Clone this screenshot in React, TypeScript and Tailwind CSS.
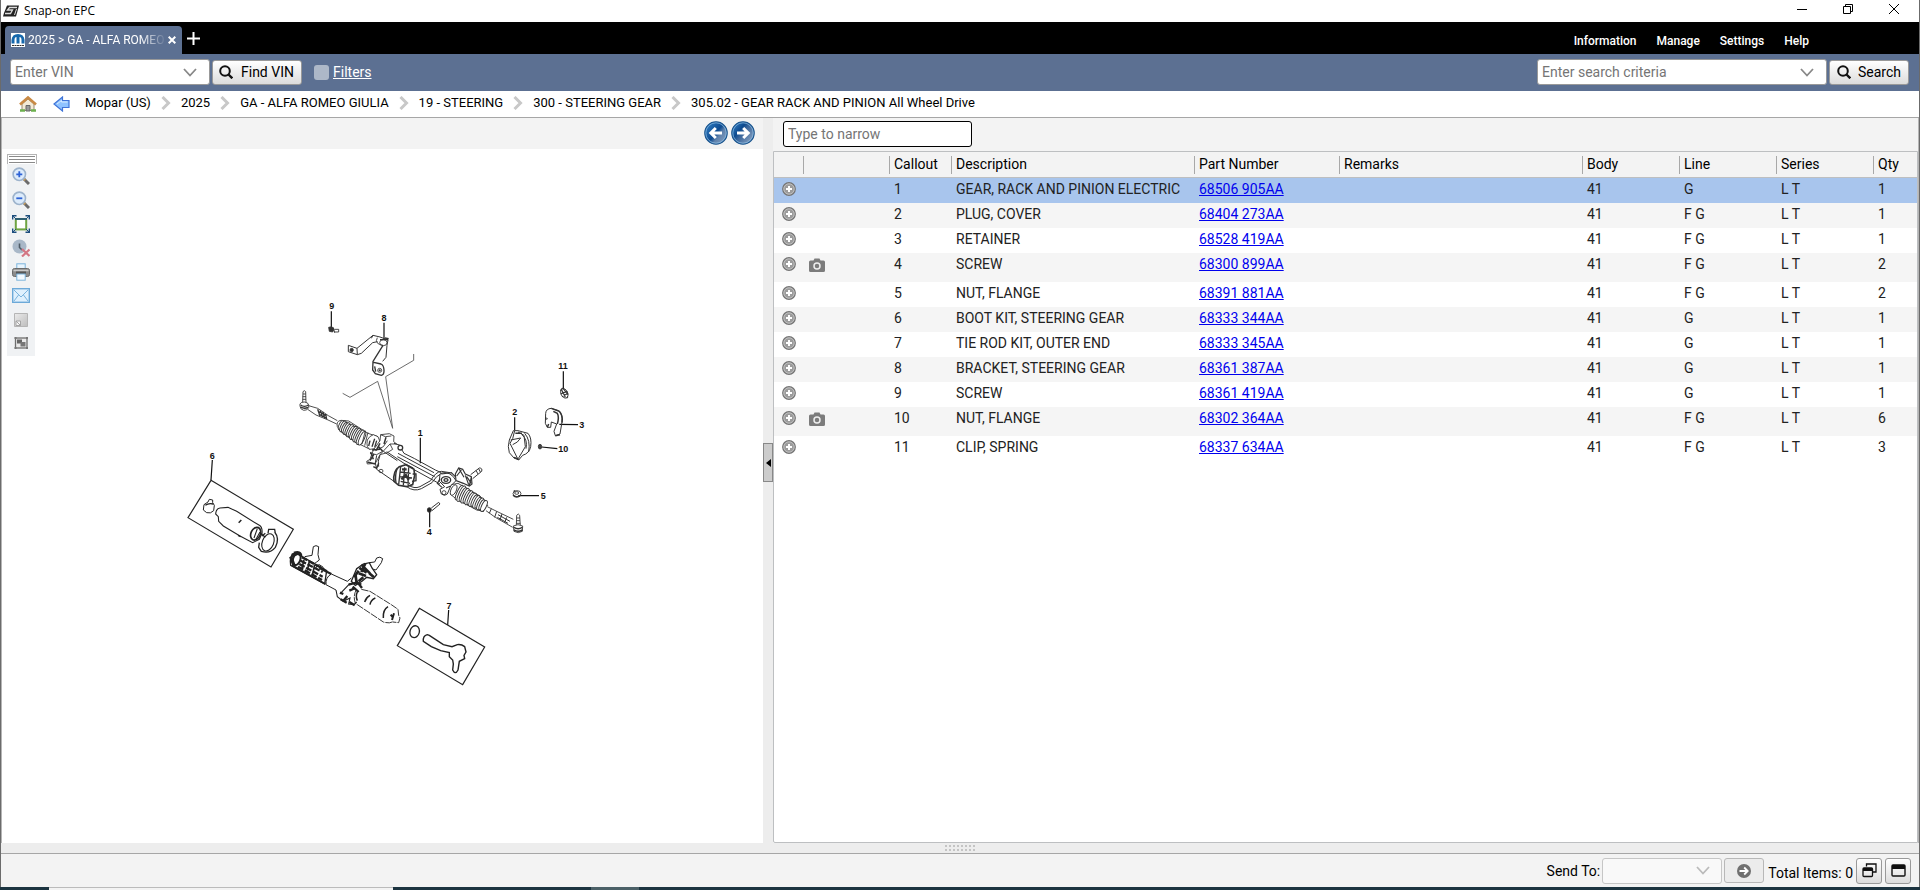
import { useState } from 'react';
import type { ReactNode } from 'react';

interface Part {
  callout: number;
  description: string;
  partNumber: string;
  line: string;
  qty: number;
  photo?: boolean;
}

const parts: Part[] = [
  { callout: 1, description: 'GEAR, RACK AND PINION ELECTRIC', partNumber: '68506 905AA', line: 'G', qty: 1 },
  { callout: 2, description: 'PLUG, COVER', partNumber: '68404 273AA', line: 'F G', qty: 1 },
  { callout: 3, description: 'RETAINER', partNumber: '68528 419AA', line: 'F G', qty: 1 },
  { callout: 4, description: 'SCREW', partNumber: '68300 899AA', line: 'F G', qty: 2, photo: true },
  { callout: 5, description: 'NUT, FLANGE', partNumber: '68391 881AA', line: 'F G', qty: 2 },
  { callout: 6, description: 'BOOT KIT, STEERING GEAR', partNumber: '68333 344AA', line: 'G', qty: 1 },
  { callout: 7, description: 'TIE ROD KIT, OUTER END', partNumber: '68333 345AA', line: 'G', qty: 1 },
  { callout: 8, description: 'BRACKET, STEERING GEAR', partNumber: '68361 387AA', line: 'G', qty: 1 },
  { callout: 9, description: 'SCREW', partNumber: '68361 419AA', line: 'G', qty: 1 },
  { callout: 10, description: 'NUT, FLANGE', partNumber: '68302 364AA', line: 'F G', qty: 6, photo: true },
  { callout: 11, description: 'CLIP, SPRING', partNumber: '68337 634AA', line: 'F G', qty: 3 },
];

const crumbs = [
  'Mopar (US)',
  '2025',
  'GA - ALFA ROMEO GIULIA',
  '19 - STEERING',
  '300 - STEERING GEAR',
  '305.02 - GEAR RACK AND PINION All Wheel Drive',
];

const columns = ['', '', 'Callout', 'Description', 'Part Number', 'Remarks', 'Body', 'Line', 'Series', 'Qty'];

function SearchIcon() {
  return (
    <svg width="14" height="14" viewBox="0 0 14 14" fill="none" stroke="#111" strokeWidth="2">
      <circle cx="6" cy="6" r="4.8" />
      <path d="M9.5 9.5L13.3 13.3" strokeWidth="2.4" />
    </svg>
  );
}

function ChevronDown({ color }: { color: string }) {
  return (
    <svg width="14" height="9" viewBox="0 0 14 9" fill="none" stroke={color} strokeWidth="1.8">
      <path d="M1 1L7 7.5L13 1" />
    </svg>
  );
}

function CrumbArrow() {
  return (
    <svg width="10" height="14" viewBox="0 0 10 14" fill="none" stroke="#c8c8c8" strokeWidth="3">
      <path d="M1.5 1L7.5 7L1.5 13" />
    </svg>
  );
}

function NavArrow({ back }: { back?: boolean }) {
  return (
    <svg width="24" height="24" viewBox="0 0 24 24">
      <defs>
        <linearGradient id={back ? 'navBack' : 'navNext'} x1={back ? '1' : '0'} y1={back ? '1' : '0'} x2={back ? '0' : '1'} y2={back ? '0.2' : '0.8'}>
          <stop offset="0" stopColor={back ? '#8aa3c2' : '#3b8bd0'} />
          <stop offset="0.4" stopColor={back ? '#5f82ad' : '#0d4a8f'} />
          <stop offset="0.55" stopColor={back ? '#0d4a8f' : '#3c679c'} />
          <stop offset="1" stopColor={back ? '#2f7cc2' : '#8aa3c2'} />
        </linearGradient>
      </defs>
      <circle cx="12" cy="12" r="11.2" fill={back ? 'url(#navBack)' : 'url(#navNext)'} stroke="#1c568f" strokeWidth="1.2" />
      <circle cx="12" cy="12" r="10.2" fill="none" stroke="#8fc0e6" strokeWidth="0.7" />
      <path
        d={back ? 'M18 12H7M11.8 7L6.8 12L11.8 17' : 'M6 12H17M12.2 7L17.2 12L12.2 17'}
        fill="none"
        stroke="#fff"
        strokeWidth="3"
      />
    </svg>
  );
}

function ToolButton({ label, children }: { label: string; children: ReactNode }) {
  return (
    <button type="button" title={label} aria-label={label} className="flex h-6 w-7 items-center justify-center">
      <svg width="18" height="18" viewBox="0 0 18 18" fill="none">
        {children}
      </svg>
    </button>
  );
}

function Magnifier({ plus }: { plus?: boolean }) {
  return (
    <>
      <path d="M11.5 11.5L17 17" stroke="#6b6b6b" strokeWidth="3" />
      <path d="M11 11L13.2 13.2" stroke="#c79a55" strokeWidth="2" />
      <circle cx="7.3" cy="7.3" r="6.2" fill="#dcebfb" stroke="#9db3cc" strokeWidth="1.6" />
      <path d={plus ? 'M4.3 7.3H10.3M7.3 4.3V10.3' : 'M4.3 7.3H10.3'} stroke="#2d62d6" strokeWidth="1.8" />
    </>
  );
}

function ToolPalette() {
  return (
    <div className="mt-[5px] ml-[5px] w-[30px] shrink-0 self-start">
      <div className="flex h-[10px] flex-col justify-end gap-[2px] border border-b-0 border-[#b4b4b4] px-px pb-px">
        <div className="h-px bg-[#8a8a8a]" />
        <div className="h-px bg-[#8a8a8a]" />
        <div className="h-px bg-[#8a8a8a]" />
      </div>
      <div className="flex w-7 flex-col bg-[#f0f2f4]">
        <ToolButton label="Zoom in">
          <Magnifier plus />
        </ToolButton>
        <ToolButton label="Zoom out">
          <Magnifier />
        </ToolButton>
        <ToolButton label="Fit to window">
          <rect x="3.8" y="4" width="10.4" height="10.4" fill="#fff" stroke="#6fa443" strokeWidth="2" />
          <path d="M3 4H15" stroke="#1d4e7d" strokeWidth="1.6" />
          <path d="M0.7 4.5V0.7H4.5M13.5 0.7H17.3V4.5M17.3 13.5V17.3H13.5M4.5 17.3H0.7V13.5" stroke="#1d4e7d" strokeWidth="1.4" />
          <path d="M1 1L4 4M17 1L14 4M17 17L14 14M1 17L4 14" stroke="#1d4e7d" />
        </ToolButton>
        <ToolButton label="Clear hotspots">
          <circle cx="7.5" cy="7.5" r="7" fill="#a9b8c8" />
          <path d="M7.5 4.5V8.5L10 11" stroke="#4d5a66" strokeWidth="1.6" />
          <path d="M10 10L17.5 17M17.5 10.5L10 17.5" stroke="#d37684" strokeWidth="2.2" />
        </ToolButton>
        <ToolButton label="Print">
          <rect x="4.8" y="0.8" width="8.4" height="6" fill="#e8f4fd" stroke="#7cb4dc" />
          <rect x="0.5" y="5.5" width="17" height="8" rx="2" fill="#8b8b8b" stroke="#6a6a6a" />
          <path d="M1.5 7.5H16.5" stroke="#c9c9c9" strokeWidth="1.6" />
          <rect x="4" y="8.5" width="10" height="3" fill="#555" />
          <rect x="4.8" y="11" width="8.4" height="6.2" fill="#f2f9ff" stroke="#7cb4dc" />
        </ToolButton>
        <ToolButton label="Email">
          <rect x="0.7" y="1.7" width="16.6" height="13.6" fill="#dff0fd" stroke="#6ca9d8" strokeWidth="1.4" />
          <path d="M2 3L9 10L16 3M2 14L6.5 8M16 14L11.5 8" stroke="#79b3dd" />
        </ToolButton>
        <ToolButton label="Note">
          <defs>
            <linearGradient id="note" x1="0" y1="0" x2="1" y2="1">
              <stop offset="0" stopColor="#ebebeb" />
              <stop offset="1" stopColor="#bdbdbd" />
            </linearGradient>
          </defs>
          <path d="M3 2.5H15.5V15.5H2.5V2.5Z" fill="url(#note)" stroke="#b5b5b5" />
          <path d="M4 10H8.5V14.5H4Z" fill="#f4f4f4" stroke="#a5a5a5" />
          <path d="M4 10L8.5 14.5" stroke="#a5a5a5" />
        </ToolButton>
        <ToolButton label="Thumbnail">
          <rect x="3.5" y="3" width="11.5" height="10" fill="#e9e9e9" stroke="#6e6e6e" strokeWidth="1.3" />
          <rect x="5" y="4.5" width="5" height="4" fill="#666" />
          <rect x="8.5" y="7" width="5" height="4.500" fill="#777" />
          <path d="M2.5 2h2v2h-2zM14 2h2v2h-2zM2.5 12h2v2h-2zM14 12h2v2h-2z" fill="#777" />
        </ToolButton>
      </div>
    </div>
  );
}

const labels = [
  { n: 9, x: 155, y: 58 },
  { n: 8, x: 312, y: 93 },
  { n: 11, x: 849, y: 237 },
  { n: 2, x: 704, y: 376 },
  { n: 3, x: 905, y: 413 },
  { n: 1, x: 421, y: 438 },
  { n: 10, x: 850, y: 486 },
  { n: 5, x: 790, y: 626 },
  { n: 4, x: 448, y: 736 },
  { n: 6, x: -203, y: 506 },
  { n: 7, x: 507, y: 956 },
];

interface BootProps {
  x1: number;
  y1: number;
  x2: number;
  y2: number;
  r1: number;
  r2: number;
  count: number;
}

// ribs of a bellows boot, from (x1,y1) to (x2,y2), tapering from r1 to r2
function Boot({ x1, y1, x2, y2, r1, r2, count }: BootProps) {
  return (
    <>
      {Array.from({ length: count }, (_, i) => {
        const t = i / (count - 1);
        const cx = x1 + (x2 - x1) * t;
        const cy = y1 + (y2 - y1) * t;
        return (
          <ellipse
            key={i}
            cx={cx}
            cy={cy}
            rx={7}
            ry={r1 + (r2 - r1) * t + (i % 2) * 2}
            transform={`rotate(25 ${cx} ${cy})`}
            fill="#fff"
            strokeWidth="2.8"
          />
        );
      })}
    </>
  );
}

function PartsDiagram() {
  return (
    <svg className="min-w-0 flex-1" viewBox="37 149 726 694" role="img" aria-label="Gear rack and pinion diagram">
      <g transform="translate(280 290) scale(0.33333)" fill="none" stroke="#333" strokeWidth="2.6">
        {/* leader lines */}
        <path
          d="M154 64V112M312 98V150M850 244V298M838 403L894 404M704 382V420M785 471L832 476M421 443V520M715 617H777M449 665V712M-203 510L-207 570M506 960L503 1005"
          stroke="#111"
          strokeWidth="3.6"
        />
        <path d="M188 310L210 322L293 274L338 415L317 260L401 211V192" stroke="#555" />

        {/* screw 9 */}
        <path d="M146 112L156 110L162 118L158 126L148 124Z" fill="#333" />
        <path d="M160 112L164 128M164 118H176V126H162" />

        {/* bracket 8 */}
        <path d="M205 166L231 175L232 194L205 185Z" strokeWidth="3" />
        <circle cx="215" cy="180" r="5" fill="#333" />
        <path d="M231 175L279 136L300 141L324 150L321 166L318 202L308 214M232 194L244 190L278 158L292 155M279 136L274 145" strokeWidth="3" />
        <path d="M309 166L279 214L278 240L286 251L304 256Q313 254 312 240Q311 225 303 222L281 217" strokeWidth="4" />
        <path d="M292 143Q286 152 293 160Q300 165 309 166" />
        <ellipse cx="310" cy="158" rx="11" ry="9" />
        <path d="M300 149H325M315 144L326 146M284 229L287 245" strokeWidth="4" />
        <circle cx="299" cy="241" r="6" />
        <circle cx="299" cy="241" r="2" fill="#333" />

        {/* outer tie rod, left */}
        <path d="M68 337L69 305Q73 299 77 305L78 337" />
        <path d="M69 312H77M68 320H78M68 328H78" />
        <path d="M60 342Q62 336 73 336Q85 337 86 345V353Q82 362 71 361Q60 358 60 348Z" fill="#fff" />
        <path d="M62 345Q73 353 85 345M62 351Q73 358 84 352" strokeWidth="4" />
        <path d="M86 347L113 355L145 377L172 392M83 358L108 375L140 388L170 402" />
        <path d="M113 358L120 378M121 361L127 381M129 366L134 385M137 372L140 388M118 365L140 378M116 372L138 384" strokeWidth="4" />

        {/* left bellows boot */}
        <path d="M172 410Q168 393 183 391L206 393L264 430L294 440M172 410L188 430L240 463L270 478" />
        <Boot x1={184} y1={406} x2={246} y2={445} r1={15} r2={22} count={13} />
        <path d="M256 422L246 462M264 427L254 467M294 440Q306 462 290 475L270 478Q258 474 262 450Q268 438 280 434Z" fill="#fff" />
        <path d="M284 446L276 470M290 452L284 472M270 452L266 468" strokeWidth="4" />

        {/* mounting collar and motor */}
        <path d="M300 452L302 434L328 431L342 438L341 455L350 462L330 462L300 494L286 520L262 522L260 514L270 508L280 480Z" fill="#fff" />
        <path d="M302 434L316 440L334 438M330 462L338 478L322 488L300 494M286 482L310 470L322 452M270 490L290 494L308 484" />
        <path d="M262 516L286 522M276 480L300 478M282 492L270 512M300 460L288 482M318 442L312 462M280 530L290 535L296 520M296 470L308 484M272 486L280 508" strokeWidth="4.5" />
        <path d="M290 496Q282 520 290 538L342 574M320 485L372 520L400 534M300 496Q292 514 296 530" strokeWidth="3" />
        <ellipse cx="303" cy="543" rx="6" ry="5" />
        <path d="M342 574Q338 544 358 530L378 524L402 538L404 556L398 584L380 590L356 586Z" fill="#fff" strokeWidth="5" />
        <path d="M352 534Q344 556 348 578M362 530L356 584M362 546L392 550M360 560L396 564M362 574L390 580M374 532L370 586M386 532L384 584M398 552H408V572L396 574" strokeWidth="4" />
        <path d="M366 538H380M376 552L386 570M364 568L376 556" strokeWidth="7" />
        <path d="M380 590Q402 606 424 596L456 578Q470 556 482 552L516 556M384 584Q402 598 420 590L452 572Q466 546 484 544L510 548" strokeWidth="3" />

        {/* rack tube */}
        <circle cx="361" cy="473" r="7" fill="#fff" strokeWidth="4" />
        <path d="M342 460L361 466M366 480L372 490L404 506L466 540L484 548M354 490L380 504L462 548M352 500L464 560M404 540L480 582M310 484L352 512" strokeWidth="3" />

        {/* pinion housing */}
        <path d="M480 552Q500 540 520 560L528 572L512 588L502 612Q494 620 484 612L480 598L494 590L478 574Z" fill="#fff" strokeWidth="3" />
        <path d="M484 552L514 548L526 560M480 566L472 580L486 592M512 588L498 594" strokeWidth="3.5" />
        <ellipse cx="498" cy="570" rx="14" ry="10" strokeWidth="4" />
        <ellipse cx="498" cy="570" rx="6" ry="4" strokeWidth="4" />
        <circle cx="492" cy="608" r="6" />
        <path d="M526 552L536 534L548 538L556 552L574 560L576 582L568 588L550 580L528 572Z" fill="#fff" strokeWidth="3.5" />
        <path d="M536 534L552 562M544 540L530 558M556 556L566 584M574 562L568 586M560 560L574 580" strokeWidth="3.5" />
        <path d="M572 554L598 534Q608 534 605 544L578 566M588 541L594 552M596 536L601 546" strokeWidth="3" />

        {/* right bellows boot and tie rod */}
        <path d="M514 584L534 580L600 618L624 648M510 612L528 626L590 660L612 664" />
        <ellipse cx="521" cy="600" rx="8" ry="17" transform="rotate(25 521 600)" fill="#fff" />
        <Boot x1={538} y1={608} x2={612} y2={648} r1={24} r2={16} count={14} />
        <path d="M622 650L650 664L700 688M618 662L646 682L698 712" />
        <path d="M634 656L628 670M650 664L644 682M654 674L690 694M652 682L684 700M666 672L660 690M680 682L674 698" strokeWidth="3" />
        <path d="M709 708L710 676Q715 668 719 676L721 708M710 684H720M710 692H720M709 700H721" />
        <path d="M700 708Q714 700 728 708L727 724Q715 732 702 724Z" fill="#fff" />
        <path d="M702 712Q714 720 727 712M702 720Q714 728 727 720" strokeWidth="4.5" />

        {/* clip 11 */}
        <ellipse cx="853" cy="310" rx="10" ry="15" transform="rotate(-25 853 310)" />
        <path d="M845 300L856 322M850 296L864 314M842 312L862 304M846 320L864 310M841 302L848 294M860 324L864 320" strokeWidth="3.5" />

        {/* retainer 3 */}
        <path d="M797 370Q798 356 814 355L836 362Q848 372 846 396L840 432L826 437L822 424L830 402L814 396L812 412L802 412L796 400Z" strokeWidth="3" />
        <path d="M814 355L838 364Q850 378 846 398M820 364L832 370Q838 380 832 402M826 437L840 434M802 412L806 402" strokeWidth="4.5" />
        <circle cx="800" cy="386" r="2" />

        {/* cover 2 */}
        <path d="M700 422L714 422L744 430Q756 444 752 470Q748 490 728 496L716 510L702 504L688 488Q682 470 688 450Z" strokeWidth="3" />
        <path d="M704 422L698 446L690 460L714 508M714 426L732 436L736 470L716 504M726 434Q744 450 738 476M698 464L712 456M692 450L722 444L712 456M734 430Q752 450 746 486" strokeWidth="3" />
        <path d="M706 430L726 430M702 502L718 508" strokeWidth="4.5" />

        {/* nuts 10 and 5, screw 4 */}
        <ellipse cx="780" cy="470" rx="5" ry="7" fill="#444" />
        <ellipse cx="711" cy="611" rx="12" ry="9" />
        <ellipse cx="710" cy="609" rx="6" ry="4" />
        <path d="M699 616Q710 626 722 616M701 604L706 602" strokeWidth="4" />
        <ellipse cx="448" cy="660" rx="6" ry="7" fill="#222" />
        <path d="M454 654L476 637L480 642L456 662" strokeWidth="3" />

        <g fill="#111" stroke="none" fontFamily="'Liberation Sans', Arial, sans-serif" fontWeight="700" fontSize="27" textAnchor="middle">
          {labels.map((l) => (
            <text key={l.n} x={l.x} y={l.y}>
              {l.n}
            </text>
          ))}
        </g>
      </g>

      <g transform="translate(170 440) scale(0.33333)" fill="none" stroke="#222" strokeWidth="3.3">
        {/* boot kit 6 */}
        <path d="M123 121L370 268L303 381L54 233Z" strokeWidth="3.6" />
        <path d="M102 194L114 186L118 178L128 180L128 188L133 196L131 212Q122 222 110 218L100 210Z" strokeWidth="3" />
        <path d="M106 196Q116 188 130 192" strokeWidth="4" />
        <path d="M137 222Q138 206 150 204L174 202L200 214L268 256Q278 262 276 280L268 298L248 308L210 288L160 258L146 244L145 230Z" />
        <path d="M214 240L206 248M204 286L212 290" strokeWidth="4.5" />
        <ellipse cx="257" cy="281" rx="14" ry="20" transform="rotate(25 257 281)" strokeWidth="5" />
        <path d="M262 266L252 294M270 276L258 298" />
        <ellipse cx="294" cy="307" rx="17" ry="27" transform="rotate(22 294 307)" />
        <path d="M314 276Q330 296 316 322Q300 342 274 334L266 322L268 308M294 280L296 268L314 268L316 280M276 288L286 280M270 278L286 292" strokeWidth="3.9" />

        {/* pinion gear service assembly */}
        <path d="M372 340Q358 346 362 376L464 432L470 392L386 344Z" strokeWidth="4" />
        <path d="M372 340Q392 334 392 348M362 350L372 376M366 346L382 340" strokeWidth="10" />
        <ellipse cx="380" cy="358" rx="11" ry="18" transform="rotate(20 380 358)" strokeWidth="6" />
        <path d="M396 352L462 388M392 362L458 396M388 372L458 410M384 380L456 420" strokeWidth="7" strokeDasharray="18 5" />
        <path d="M402 360L396 384M418 364L412 392M434 374L428 402" strokeWidth="5" />
        <path d="M366 376L466 432M448 384L484 402" strokeWidth="6" />
        <path d="M404 350L426 346L430 320Q438 314 446 320L444 344L448 360Q440 366 432 372M440 388Q436 376 448 374L460 382" strokeWidth="3" />
        <path d="M484 402Q466 412 468 434M484 402L532 424L544 414M468 434L498 450" strokeWidth="3" />
        <path d="M498 450L502 470L520 484L540 474L536 492L552 494L560 486M540 430L510 462" />
        <path d="M544 424L560 386L580 372L598 368L606 384L620 404L610 416L590 412L576 424L556 436Z" strokeWidth="4" />
        <path d="M552 412L566 392M560 430L556 400M568 384L590 398M574 374L600 400M566 400L588 408M586 370L574 396M598 400L612 412M580 412L566 424" strokeWidth="8" />
        <path d="M536 434L558 428L574 434M548 440L566 456M560 424L576 444M538 452L556 444M510 458L520 462M512 478L530 488M538 486L554 496M532 468L520 482" strokeWidth="7" />
        <path d="M598 368L614 366L620 354Q630 348 638 356L634 368L618 390L610 388" strokeWidth="3" />
        <path d="M560 448Q548 466 556 490L640 546Q660 552 670 544M574 448L600 454L664 494L684 508L686 526L690 534L686 548L668 546" strokeWidth="2.7" strokeDasharray="22 3" />
        <path d="M600 466Q588 472 584 486M616 474Q602 480 600 494M654 500Q638 510 640 534M562 456Q556 468 562 482" strokeWidth="4.5" />
        <path d="M662 524L670 534M672 520L666 540" strokeWidth="6" />

        {/* tie rod kit 7 */}
        <path d="M748 505L944 621L878 734L682 617Z" strokeWidth="3.6" />
        <ellipse cx="734" cy="575" rx="14" ry="18" transform="rotate(15 734 575)" strokeWidth="3.9" />
        <path
          d="M772 584Q758 588 760 604L784 620L812 632L838 638L838 650L848 660L850 672L848 690Q856 706 864 690L868 664L884 656L882 646L888 636L884 620Q874 612 862 614L846 620L820 614L778 586Z"
          strokeWidth="4.2"
        />
      </g>
    </svg>
  );
}

function ExpandIcon() {
  return (
    <svg width="14" height="14" viewBox="0 0 14 14">
      <circle cx="7" cy="7" r="6.3" fill="#9c9c9c" stroke="#757575" strokeWidth="1.2" />
      <circle cx="7" cy="7" r="5.2" fill="none" stroke="#cfcfcf" strokeWidth="0.7" />
      <path d="M7 4V10M4 7H10" stroke="#fff" strokeWidth="2" />
    </svg>
  );
}

function CameraIcon() {
  return (
    <svg width="16" height="14" viewBox="0 0 16 14">
      <path d="M1.500 2.500H4.500L5.500 0.500H10.500L11.500 2.500H14.500Q16 2.500 16 4V12.500Q16 14 14.500 14H1.500Q0 14 0 12.500V4Q0 2.500 1.500 2.500Z" fill="#7c7c7c" />
      <circle cx="8" cy="8" r="3" fill="none" stroke="#eee" strokeWidth="1.5" />
    </svg>
  );
}

function PartsTable() {
  const [selected, setSelected] = useState(1);

  return (
    <table className="w-full table-fixed border-separate border-spacing-0 text-left text-sm leading-5">
      <colgroup>
        <col className="w-[29px]" />
        <col className="w-[86px]" />
        <col className="w-[62px]" />
        <col className="w-[243px]" />
        <col className="w-[145px]" />
        <col />
        <col className="w-[97px]" />
        <col className="w-[97px]" />
        <col className="w-[97px]" />
        <col className="w-[44px]" />
      </colgroup>
      <thead>
        <tr className="h-[26px] bg-[#f3f3f3] text-black">
          {columns.map((c, i) => (
            <th key={i} className="border-b border-[#bdbfc1] p-0 font-normal">
              <div className={i === 0 ? 'h-[18px]' : 'h-[18px] border-l border-[#a8a8a8] pl-1 leading-4'}>{c}</div>
            </th>
          ))}
        </tr>
      </thead>
      <tbody className="text-[#222]">
        {parts.map((p) => (
          <tr
            key={p.callout}
            onClick={() => setSelected(p.callout)}
            className={`${p.photo ? 'h-[29px]' : 'h-[25px]'} ${
              p.callout === selected ? 'bg-[#a8c5ed]' : p.callout % 2 === 0 ? 'bg-[#f5f5f5]' : 'bg-white'
            }`}
          >
            <td className="p-0 pt-1 pl-2 align-top">
              <button type="button" aria-label="Expand" className="block">
                <ExpandIcon />
              </button>
            </td>
            <td className="p-0 pt-[5px] pl-[6px] align-top">{p.photo && <CameraIcon />}</td>
            <td className="p-0 pt-px pl-[5px] align-top">{p.callout}</td>
            <td className="p-0 pt-px pl-[5px] align-top whitespace-nowrap">{p.description}</td>
            <td className="p-0 pt-px pl-[5px] align-top">
              <a href="#" className="text-[#0000ee] underline">
                {p.partNumber}
              </a>
            </td>
            <td className="p-0" />
            <td className="p-0 pt-px pl-[5px] align-top">41</td>
            <td className="p-0 pt-px pl-[5px] align-top">{p.line}</td>
            <td className="p-0 pt-px pl-[5px] align-top">L T</td>
            <td className="p-0 pt-px pl-[5px] align-top">{p.qty}</td>
          </tr>
        ))}
      </tbody>
    </table>
  );
}

function TitleBar() {
  return (
    <div className="flex h-[22px] items-center bg-white pr-5 pl-[2px]">
      <svg width="16" height="12" viewBox="0 0 16 12">
        <path d="M4 0.500H16L13 11.500H0L1 8Z" fill="#222" />
        <path d="M14 2.500H6.500L4.500 5H9.500L7.500 8.500H2" fill="none" stroke="#ddd" strokeWidth="1.3" />
        <path d="M13.500 4L11.500 10" stroke="#ddd" />
      </svg>
      <h1 className="ml-[5px] font-['Open_Sans',sans-serif] text-xs text-black">Snap-on EPC</h1>
      <div className="ml-auto flex items-center gap-9 pb-1">
        <button type="button" aria-label="Minimize">
          <svg width="10" height="10" viewBox="0 0 10 10" stroke="#000">
            <path d="M0 5.500H10" />
          </svg>
        </button>
        <button type="button" aria-label="Restore">
          <svg width="10" height="10" viewBox="0 0 10 10" fill="none" stroke="#000">
            <path d="M0.500 2.500H7.500V9.500H0.500ZM2.500 2.500V0.500H9.500V7.500H7.500" />
          </svg>
        </button>
        <button type="button" aria-label="Close">
          <svg width="10" height="10" viewBox="0 0 10 10" stroke="#000">
            <path d="M0 0L10 10M10 0L0 10" />
          </svg>
        </button>
      </div>
    </div>
  );
}

const buttonStyle = 'flex items-center rounded-[3px] border border-[#999] bg-linear-to-b from-white to-[#dcdcdc] text-sm text-black';

export default function App() {
  return (
    <div className="flex h-screen flex-col bg-[#f3f3f3] font-[Roboto,sans-serif] text-sm text-black">
      <div className="flex min-h-0 flex-1 flex-col border-x border-[#6b6b6b]">
        <TitleBar />

        <div className="flex h-8 items-end bg-black">
          <div className="ml-1 flex h-7 w-[177px] items-center rounded-t-[4px] bg-[#5c7092] pl-[6px] text-white">
            <svg width="14" height="14" viewBox="0 0 14 14" className="shrink-0">
              <rect width="14" height="14" fill="#fff" />
              <path d="M0.500 10.500V7Q1 1 7 1Q13 1 13.500 7V10.500H10.500V7Q10.500 4 8.500 4V10.500H5.500V4Q3.500 4 3.500 7V10.500Z" fill="#1668ad" />
              <path d="M1 12.500H13" stroke="#333" strokeDasharray="2 0.5" />
            </svg>
            <span className="ml-[3px] w-[139px] text-xs whitespace-nowrap [mask-image:linear-gradient(to_right,#000_80%,transparent)]">
              2025 &gt; GA - ALFA ROMEO
            </span>
            <button type="button" aria-label="Close tab" className="ml-px">
              <svg width="8" height="8" viewBox="0 0 8 8" stroke="#fff" strokeWidth="2">
                <path d="M0.700 0.700L7.300 7.300M7.300 0.700L0.700 7.300" />
              </svg>
            </button>
          </div>
          <button type="button" aria-label="New tab" className="mb-[9px] ml-[5px]">
            <svg width="13" height="13" viewBox="0 0 13 13" stroke="#fff" strokeWidth="2">
              <path d="M6.500 0V13M0 6.500H13" />
            </svg>
          </button>
          <nav className="mr-[110px] ml-auto flex gap-5 self-center pt-[5px] text-xs font-medium text-white">
            <a href="#">Information</a>
            <a href="#">Manage</a>
            <a href="#">Settings</a>
            <a href="#">Help</a>
          </nav>
        </div>

        <div className="flex h-[37px] items-center bg-[#5c7092] pr-[10px] pb-px pl-[9px]">
          <div className="flex h-[26px] w-[200px] items-center rounded-[3px] border border-[#999] bg-white pr-3">
            <input type="text" aria-label="VIN" placeholder="Enter VIN" className="min-w-0 flex-1 pb-px pl-1 outline-none placeholder:text-[#757575]" />
            <button type="button" aria-label="Recent VINs">
              <ChevronDown color="#888" />
            </button>
          </div>
          <button type="button" className={`${buttonStyle} ml-[2px] h-[25px] w-[90px] gap-2 pl-[6px]`}>
            <SearchIcon />
            Find VIN
          </button>
          <input id="filters" type="checkbox" className="ml-3 size-[15px] appearance-none rounded-[3px] bg-[#adb8c8]" />
          <label htmlFor="filters" className="ml-1 text-white underline">
            Filters
          </label>
          <div className="ml-auto flex h-[26px] w-[290px] items-center rounded-[3px] border border-[#999] bg-white pr-3">
            <input type="text" aria-label="Search criteria" placeholder="Enter search criteria" className="min-w-0 flex-1 pb-px pl-1 outline-none placeholder:text-[#757575]" />
            <button type="button" aria-label="Recent searches">
              <ChevronDown color="#888" />
            </button>
          </div>
          <button type="button" className={`${buttonStyle} ml-[2px] h-[25px] w-20 gap-[7px] pl-[7px]`}>
            <SearchIcon />
            Search
          </button>
        </div>

        <nav className="flex h-[27px] items-center border-b border-[#a6a6a6] bg-white pl-[18px] text-[13px]">
          <a href="#" aria-label="Home">
            <svg width="18" height="16" viewBox="0 0 18 16">
              <path d="M3 8L9 3L15 8V14.500H3Z" fill="#f3ead6" stroke="#9a8a70" />
              <path d="M1 8.500L9 1.500L17 8.500" fill="none" stroke="#c98a45" strokeWidth="2.6" />
              <path d="M7 15V9.500H11V15Z" fill="#999" stroke="#666" />
              <path d="M1 14.500H6M12 14.500H17" stroke="#6cb04e" strokeWidth="2.5" />
            </svg>
          </a>
          <a href="#" aria-label="Back" className="ml-4">
            <svg width="17" height="16" viewBox="0 0 17 16">
              <path d="M1 8L9.500 1V4.500H16V11.500H9.500V15Z" fill="#8fc3ff" stroke="#3f74d8" strokeWidth="1.2" />
              <path d="M4 8L8.500 4.500V6H14.500" fill="none" stroke="#d7ebff" />
            </svg>
          </a>
          <ol className="ml-[15px] flex items-center gap-[10px] pb-[2px]">
            {crumbs.map((c, i) => (
              <li key={c} className="flex items-center gap-[10px]">
                {i > 0 && <CrumbArrow />}
                <a href="#">{c}</a>
              </li>
            ))}
          </ol>
        </nav>

        <main className="flex min-h-0 flex-1 border-x border-[#b5b5b5]">
          <section className="flex w-[761px] shrink-0 flex-col bg-white">
            <div className="flex h-[31px] items-center justify-end gap-[3px] bg-[#f3f3f3] pr-2 pb-px">
              <button type="button" aria-label="Previous">
                <NavArrow back />
              </button>
              <button type="button" aria-label="Next">
                <NavArrow />
              </button>
            </div>
            <div className="flex min-h-0 flex-1">
              <ToolPalette />
              <PartsDiagram />
            </div>
          </section>

          <div className="flex w-[10px] flex-col items-center justify-center bg-[#ededed] pb-9">
            <button type="button" aria-label="Collapse diagram" className="flex h-[39px] w-[10px] items-center justify-center border border-[#888] bg-[#ccc]">
              <svg width="5" height="8" viewBox="0 0 5 8">
                <path d="M5 0V8L0 4Z" fill="#000" />
              </svg>
            </button>
          </div>

          <section className="flex min-w-0 flex-1 flex-col">
            <div className="flex h-[33px] items-center pb-px pl-[10px]">
              <input
                type="text"
                aria-label="Type to narrow"
                placeholder="Type to narrow"
                className="h-[26px] w-[189px] rounded-[3px] border border-black bg-white pl-1 outline-none placeholder:text-[#757575]"
              />
            </div>
            <div className="min-h-0 flex-1 rounded-bl-[2px] border border-[#bdbfc1] bg-white">
              <PartsTable />
            </div>
          </section>
        </main>

        <div className="flex h-[11px] items-center justify-center border-b border-[#a6a6a6] bg-[#ededed]">
          <svg width="31" height="6" viewBox="0 0 31 6" stroke="#c4c4c4" strokeWidth="2" strokeDasharray="2 2">
            <path d="M0 1H31M0 5H31" />
          </svg>
        </div>

        <footer className="flex h-[33px] items-center pr-2">
          <label htmlFor="sendTo" className="mr-[2px] ml-auto">
            Send To:
          </label>
          <div className="grid h-[26px] w-[120px] items-center">
            <select id="sendTo" disabled className="col-start-1 row-start-1 h-full w-full appearance-none rounded-[3px] border border-[#c6c6c6] bg-[#f9f9f9]" />
            <div className="col-start-1 row-start-1 justify-self-end pr-3">
              <ChevronDown color="#bbb" />
            </div>
          </div>
          <button type="button" aria-label="Send" className="ml-[2px] flex h-[25px] w-10 items-center justify-center rounded-[3px] border border-[#b8b8b8] bg-[#ececec]">
            <svg width="14" height="14" viewBox="0 0 14 14" fill="none">
              <circle cx="7" cy="7" r="7" fill="#707070" />
              <path d="M2.500 7H10.500M7.200 3.500L10.700 7L7.200 10.500" stroke="#fff" strokeWidth="1.8" />
            </svg>
          </button>
          <span className="ml-1 pt-1">Total Items: 0</span>
          <button type="button" aria-label="Open windows" className={`${buttonStyle} ml-[3px] size-[26px] justify-center`}>
            <svg width="15" height="15" viewBox="0 0 15 15" fill="none" stroke="#111" strokeWidth="1.3">
              <path d="M4.500 3.500V1H14V9H11" />
              <rect x="1" y="5" width="9.5" height="8.5" rx="1" />
              <path d="M1 6.500H10.500" strokeWidth="3" />
            </svg>
          </button>
          <button type="button" aria-label="Maximize panel" className={`${buttonStyle} ml-[3px] size-[26px] justify-center`}>
            <svg width="15" height="13" viewBox="0 0 15 13" fill="none" stroke="#111" strokeWidth="1.4">
              <rect x="1" y="1" width="13" height="11" rx="1" />
              <path d="M1 3H14" strokeWidth="4" />
            </svg>
          </button>
        </footer>
      </div>

      <div className="flex h-[3px] bg-[#1c3440]">
        <div className="ml-[49px] w-[344px] border-t border-[#bbb] bg-[#f3f3f3]" />
        <div className="ml-[198px] w-12 bg-[#4b6067]" />
      </div>
    </div>
  );
}
